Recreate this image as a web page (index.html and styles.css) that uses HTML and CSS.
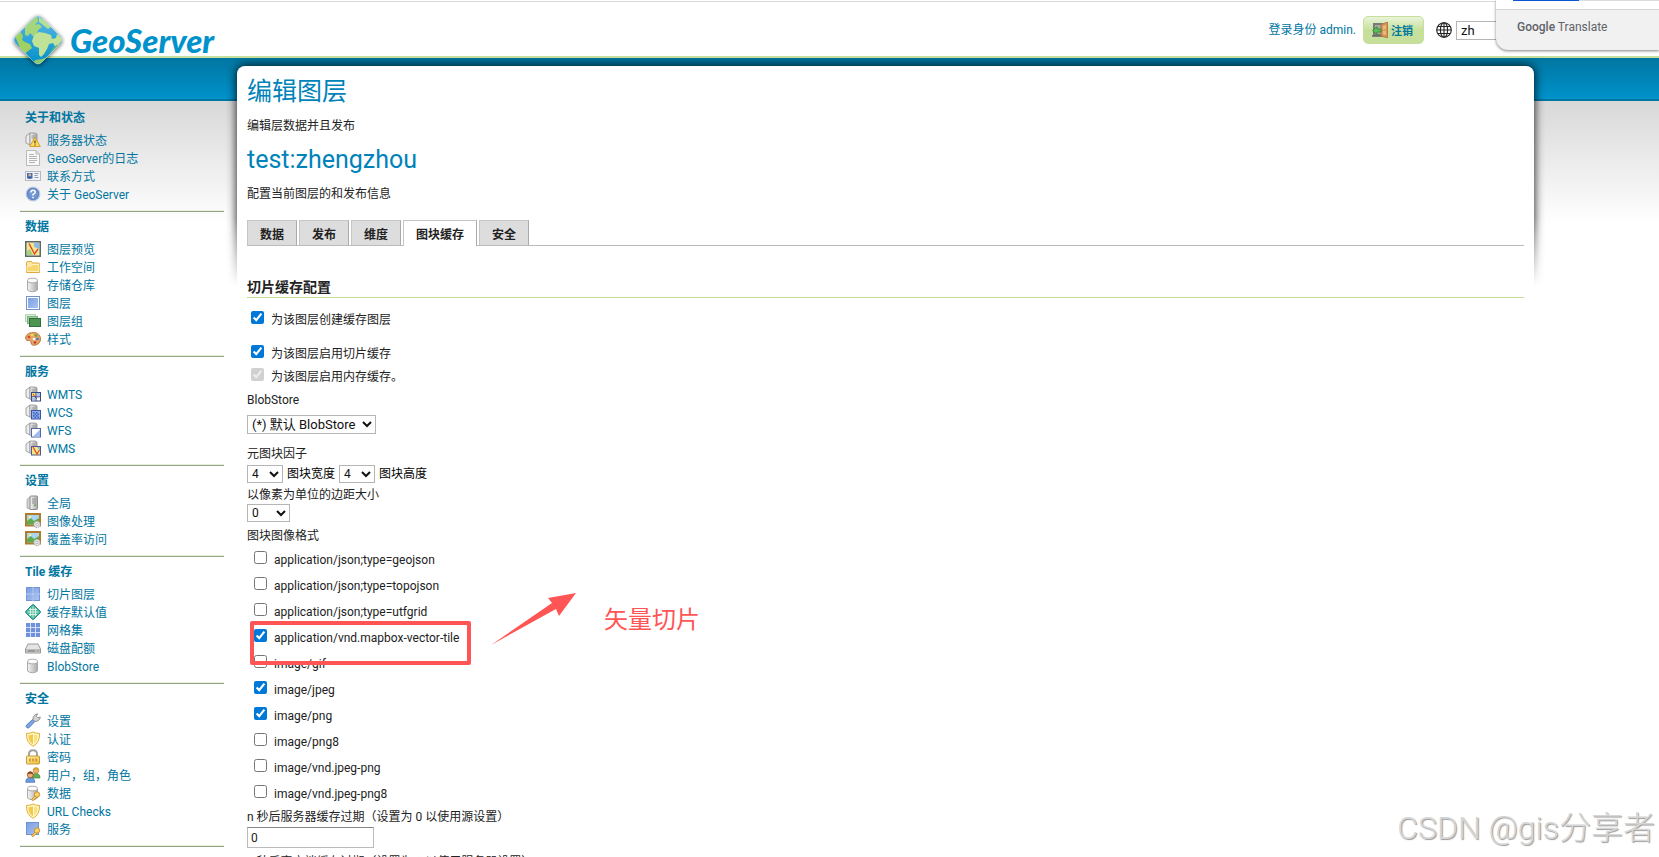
FILE: index.html
```
<!DOCTYPE html>
<html lang="zh-CN">
<head>
  <meta charset="UTF-8">
  <meta name="viewport" content="width=device-width, initial-scale=1.0">
  <title>GeoServer: 编辑图层</title>
  <link rel="stylesheet" href="styles.css">
</head>
<body>
  <!-- icon set -->
  <svg class="sprite" aria-hidden="true">
    <defs>
      <linearGradient id="gGrey" x1="0" x2="1" y1="0" y2="0"><stop offset="0" stop-color="#f6f6f6"/><stop offset="1" stop-color="#a9a9a9"/></linearGradient>
      <linearGradient id="gBlue" x1="0" x2="1" y1="0" y2="1"><stop offset="0" stop-color="#7c9fdf"/><stop offset="1" stop-color="#a9c4f2"/></linearGradient>
      <linearGradient id="gGold" x1="0" x2="1" y1="0" y2="1"><stop offset="0" stop-color="#fff3ae"/><stop offset="1" stop-color="#eab93a"/></linearGradient>
      <linearGradient id="gGlobe" x1="0" x2="0" y1="0" y2="1"><stop offset="0" stop-color="#5db9e6"/><stop offset="1" stop-color="#008fc9"/></linearGradient>
      <clipPath id="logoClip"><path d="M21 3Q25 -1 29 3L47 21Q51 25 47 29L29 47Q25 51 21 47L3 29Q-1 25 3 21Z"/></clipPath>
    </defs>
    <symbol id="i-server" viewBox="0 0 16 16">
      <path d="M2 4.500 5.500 1.500V14.500L2 13Z" fill="#d4d4d4" stroke="#999" stroke-width=".7"/>
      <rect x="5" y="1" width="7.500" height="13.500" rx="1" fill="url(#gGrey)" stroke="#8b8b8b"/>
      <path d="M7 4h4M7 6h4M7 8h4" stroke="#888" stroke-width=".9"/><rect x="9" y="9.500" width="2" height="1.500" fill="#6a9c55"/>
    </symbol>
    <symbol id="i-service" viewBox="0 0 16 16">
      <path d="M1 4 5 1V13L1 11Z" fill="#ededed" stroke="#8f8f8f" stroke-width=".8"/>
      <path d="M5 1h5l2 1v12H7l-2-1Z" fill="url(#gGrey)" stroke="#8f8f8f" stroke-width=".8"/>
      <path d="M6.500 4h4M6.500 6h4" stroke="#888" stroke-width=".8"/>
    </symbol>
    <symbol id="i-status" viewBox="0 0 16 16">
      <use href="#i-service"/>
      <path d="M10 5.500 15.300 14.500H4.700Z" fill="#fbdc60" stroke="#d99f2b" stroke-linejoin="round"/>
      <path d="M10 8.500v3M10 12.500v1" stroke="#4d3a0a" stroke-width="1.200"/>
    </symbol>
    <symbol id="i-page" viewBox="0 0 16 16">
      <path d="M1.500 .500H11L14.500 4V15.500H1.500Z" fill="#f8f8f8" stroke="#bababa"/>
      <path d="M11 .500V4h3.500" fill="#ddd" stroke="#bababa"/>
      <path d="M4 4.500h5M4 6.500h8M4 8.500h8M4 10.500h8M4 12.500h6" stroke="#b5b5b5"/>
    </symbol>
    <symbol id="i-card" viewBox="0 0 16 16">
      <rect x=".5" y="3.500" width="15" height="9" fill="#f1f3f6" stroke="#b3b9c2"/>
      <rect x="2" y="5" width="5.500" height="5.500" fill="#3f6db5"/><circle cx="4.800" cy="7" r="1.400" fill="#e8b582"/><path d="M3 10.500q1.800-3 3.600 0" fill="#274a87"/>
      <path d="M9.500 5.500h4M9.500 7.500h3M9.500 9.500h4" stroke="#8f99a8"/>
    </symbol>
    <symbol id="i-help" viewBox="0 0 16 16">
      <circle cx="8" cy="8" r="6.800" fill="#5b84c4" stroke="#b9c8e2" stroke-width="1.200"/>
      <circle cx="8" cy="8" r="5" fill="#7296d1"/>
      <path d="M5.800 6.500Q6 4.200 8 4.200q2.200 0 2.200 2Q10.200 7.500 8 8.400V9.500M8 10.700v1.500" fill="none" stroke="#fff" stroke-width="1.500"/>
    </symbol>
    <symbol id="i-preview" viewBox="0 0 16 16">
      <rect x=".8" y=".8" width="14.400" height="14.400" fill="#fff" stroke="#586258" stroke-width="1.500"/>
      <path d="M2 2h7v4l5 2v6H2Z" fill="#f5e786"/><path d="M9 2h5v6L9 6Z" fill="#8ebae8"/><path d="M2 10 5 8l3 6H2Z" fill="#a8d179"/>
      <path d="M4 2.500 9.500 13 13 8" fill="none" stroke="#db4935" stroke-width="1.400"/>
    </symbol>
    <symbol id="i-folder" viewBox="0 0 16 16">
      <path d="M1.500 3.500Q1.500 2.500 2.500 2.500h4l1 1.500h6q1 0 1 1v8.500h-13Z" fill="#fbe6a2" stroke="#dfa940"/>
      <path d="M2 12.500V7h4.500L8 5.500h6v7Z" fill="#f8d66f" stroke="#fdf4cf" stroke-width=".8"/>
    </symbol>
    <symbol id="i-db" viewBox="0 0 16 16">
      <path d="M2.500 3.500v9.500q2 1.800 5 1.800t5-1.800V3.500" fill="url(#gGrey)" stroke="#aaa"/>
      <ellipse cx="7.500" cy="3.500" rx="5" ry="2.300" fill="#fafafa" stroke="#aaa"/>
    </symbol>
    <symbol id="i-layer" viewBox="0 0 16 16">
      <rect x="1.500" y="1.500" width="13" height="13" fill="#fff" stroke="#7391ca"/><rect x="3" y="3" width="10" height="10" fill="url(#gBlue)"/>
    </symbol>
    <symbol id="i-group" viewBox="0 0 16 16">
      <rect x=".5" y="1.500" width="10" height="7" fill="#dcefdc" stroke="#b5d6b5"/>
      <rect x="2.500" y="3.500" width="10" height="7" fill="#9fcba0" stroke="#7eb37f"/>
      <rect x="4.500" y="5.500" width="11" height="8" fill="#4d9450" stroke="#30713a"/>
    </symbol>
    <symbol id="i-palette" viewBox="0 0 16 16">
      <path d="M8.500 1.500C3 1.500.6 4.500.6 7c0 2.500 2 2.700 3.700 2.500 1.700-.2 1.600 1.200 1.700 2.500.2 2 2 2.500 4 2.200 3.500-.6 5.500-3.200 5.500-6.200 0-4-3-6.500-7-6.500Z" fill="#e5a566" stroke="#b5713b" stroke-width=".9"/>
      <circle cx="4" cy="6" r="1.300" fill="#e03c31"/><circle cx="7" cy="4" r="1.300" fill="#f4df4f"/><circle cx="11" cy="4.500" r="1.300" fill="#55a84c"/><circle cx="12.500" cy="8" r="1.300" fill="#3d7cc9"/><circle cx="9" cy="8" r="1.300" fill="#fff"/><circle cx="10" cy="11.500" r="1.300" fill="#bf3d2d"/>
    </symbol>
    <symbol id="i-wmts" viewBox="0 0 16 16">
      <use href="#i-service"/>
      <rect x="6.500" y="6.500" width="9" height="8.500" fill="#fff" stroke="#3c4a82"/>
      <path d="M7 7h4v4H7Z" fill="#f1dd6f"/><path d="M12 7h3v3h-3ZM7 12h3v2H7Z" fill="#a3c3f1"/><path d="M8 8l4 5" stroke="#d84937"/><path d="M6.500 10.800h9M11 6.500V15" stroke="#3c4a82"/>
    </symbol>
    <symbol id="i-wcs" viewBox="0 0 16 16">
      <use href="#i-service"/>
      <rect x="6.500" y="6.500" width="9" height="8.500" fill="#8eaee9" stroke="#3c55a5"/>
      <path d="M8 8h1.500v1.500H8Zm3 0h1.500v1.500H11Zm-1.500 1.500H11V11H9.500Zm3 0H14V11h-1.500ZM8 11h1.500v1.500H8Zm3 0h1.500v1.500H11Zm-1.500 1.500H11V14H9.500Zm3 0H14V14h-1.500Z" fill="#3f60b8"/>
    </symbol>
    <symbol id="i-wfs" viewBox="0 0 16 16">
      <use href="#i-service"/>
      <rect x="6.500" y="6.500" width="9" height="8.500" fill="#fff" stroke="#5267a5"/><path d="M8 14.500 15 7.500v7Z" fill="#9dbcf0"/>
    </symbol>
    <symbol id="i-wms" viewBox="0 0 16 16">
      <use href="#i-service"/>
      <rect x="6.500" y="6.500" width="9" height="8.500" fill="#f5e786" stroke="#51588b"/><path d="M12 7h3v4Z" fill="#8ebae8"/><path d="M8 7l4 7 2.500-4" fill="none" stroke="#db4935" stroke-width="1.200"/>
    </symbol>
    <symbol id="i-image" viewBox="0 0 16 16">
      <rect x="1" y="1" width="14" height="11.500" fill="#a9d5f3" stroke="#b17b2c" stroke-width="2"/>
      <path d="M2 8 6 5l3 3 5-3v6.500H2Z" fill="#61ab4d"/><circle cx="5" cy="4" r="1.200" fill="#fff27a"/>
      <circle cx="12" cy="11.500" r="3.200" fill="#e4e4e4" stroke="#9b9b9b" stroke-dasharray="1.500 1"/><circle cx="12" cy="11.500" r="1.200" fill="#fff" stroke="#999" stroke-width=".6"/>
    </symbol>
    <symbol id="i-tiles" viewBox="0 0 16 16">
      <rect x="1" y="1" width="14" height="14" fill="#7293dc"/><path d="M2 2h5.500v5.500H2ZM8.500 2H14v5.500H8.500ZM2 8.500h5.500V14H2ZM8.500 8.500H14V14H8.500Z" fill="url(#gBlue)"/><path d="M8 1v14M1 8h14" stroke="#d4e0fa" stroke-width=".8"/>
    </symbol>
    <symbol id="i-grid" viewBox="0 0 16 16">
      <rect x="1" y="1" width="14" height="14" fill="#6f91dc"/><path d="M5.500 1v14M10.500 1v14M1 5.500h14M1 10.500h14" stroke="#d4e0fa"/>
    </symbol>
    <symbol id="i-gwc" viewBox="0 0 16 16">
      <path d="M7 1 1 7q-1 1 0 2l6 6q1 1 2 0l6-6q1-1 0-2L9 1Q8 0 7 1Z" fill="#4bb5a2" stroke="#218c80"/>
      <path d="M5.500 4v8M8 2.500v11M10.500 4v8M4 5.500h8M2.500 8h11M4 10.500h8" stroke="#d8f2df"/>
    </symbol>
    <symbol id="i-disk" viewBox="0 0 16 16">
      <path d="M3 4h10l2.500 5v4H.5V9Z" fill="#e5e5e5" stroke="#999"/><path d="M1 9h14v4H1Z" fill="#bcbcbc"/><path d="M3 11h7" stroke="#777"/><path d="M12 11h1.500" stroke="#6caf4f"/>
    </symbol>
    <symbol id="i-wrench" viewBox="0 0 16 16">
      <path d="M1.500 12 7.500 6.500l2.200 2.200L4.200 14.600q-1.300 1-2.500-.2T1.500 12Z" fill="#7ba3e3" stroke="#4d74b8" stroke-width=".8"/>
      <path d="M8 6.500Q7.800 2 12.500.8L11.300 3.300l1.500 1.500L15.300 4Q14.500 8.500 10 8.500Z" fill="#d5d5d5" stroke="#7c7c7c" stroke-width=".8"/>
    </symbol>
    <symbol id="i-shield" viewBox="0 0 16 16">
      <path d="M8 1Q5 2.800 1.500 2.300 1 11.500 8 15.300 15 11.500 14.500 2.300 11 2.800 8 1Z" fill="#fff6c9" stroke="#dfb032"/>
      <path d="M8 3.200Q5.500 4.500 3.400 4.200 3.500 10.500 8 13.300Z" fill="#f1c94d"/><path d="M9 3.500q2 1 3.600.7Q12.500 9.700 9 12.500Z" fill="#f8df80"/>
    </symbol>
    <symbol id="i-lock" viewBox="0 0 16 16">
      <path d="M4 7.500V5q0-3.700 4-3.700T12 5v2.500" fill="none" stroke="#a2a2a2" stroke-width="2"/>
      <rect x="1.500" y="7" width="13" height="8" rx=".8" fill="url(#gGold)" stroke="#cb9a35"/><path d="M4 9.500h2v3H4ZM7 9.500h2v3H7ZM10 9.500h2v3h-2Z" fill="#d69f35"/>
    </symbol>
    <symbol id="i-users" viewBox="0 0 16 16">
      <path d="M7 11Q7 6.500 11 6.500T15 11Z" fill="#65ad50" stroke="#428637" stroke-width=".7"/><circle cx="11" cy="3.500" r="2.800" fill="#efb178" stroke="#b98421" stroke-width=".8"/><path d="M8.300 3q.5-2.500 2.700-2.500T13.700 3Q11 1.800 8.300 3Z" fill="#d7a421"/>
      <path d="M.8 15.300Q.8 10.500 5.200 10.500T9.800 15.300Z" fill="#6a9ae0" stroke="#3d6ab0" stroke-width=".7"/><circle cx="5.300" cy="7.800" r="3" fill="#efb178" stroke="#92532e" stroke-width=".8"/><path d="M2.400 7.500Q2.800 4.500 5.300 4.500T8.200 7.500Q5 6 2.400 7.500Z" fill="#8b4a28"/>
    </symbol>
    <symbol id="i-key" viewBox="0 0 16 16">
      <circle cx="12" cy="9.500" r="2.700" fill="#f8d36b" stroke="#cb8e2b"/><path d="M10 11 6.500 14.500l1.500 1 3-2.500" fill="#f8d36b" stroke="#cb8e2b"/>
    </symbol>
    <symbol id="i-dbkey" viewBox="0 0 16 16"><use href="#i-db"/><use href="#i-key"/></symbol>
    <symbol id="i-svckey" viewBox="0 0 16 16"><rect x="1.500" y="1.500" width="12" height="12" fill="url(#gBlue)" stroke="#6f91d2"/><use href="#i-key"/></symbol>
    <symbol id="i-door" viewBox="0 0 16 16">
      <path d="M1 1h10v13H1Z" fill="#777d76"/><path d="M3 3h6v9H3Z" fill="#a4aaa2"/><path d="M0 14h11" stroke="#656565" stroke-width="1.500"/>
      <path d="M9 2.500 15.500 0v16L9 14Z" fill="#d69453" stroke="#a66930" stroke-width=".7"/><path d="M11 4 14 3v4l-3 .5ZM11 9l3-.5V13l-3-.8Z" fill="#edba7d"/>
      <path d="M.5 8.500 5 4.700V7h4v3H5v2.300Z" fill="#5dbd5a" stroke="#26802b" stroke-width=".7"/>
    </symbol>
    <symbol id="i-globe" viewBox="0 0 16 16">
      <g fill="none" stroke="#222" stroke-width="1.100"><circle cx="8" cy="8" r="7.300"/><ellipse cx="8" cy="8" rx="3.600" ry="7.300"/><path d="M8 .7v14.600M.7 8h14.600M1.800 4.500h12.400M1.800 11.500h12.400"/></g>
    </symbol>
  </svg>

  <header class="header">
    <a class="logo" href="#">
      <svg class="logo-mark" viewBox="0 0 50 50" aria-hidden="true">
        <g clip-path="url(#logoClip)">
          <path d="M0 0h50v50H0Z" fill="url(#gGlobe)"/>
          <path d="M12 12 24 1l1 5-3 4 4-1 3 3-4 3-1 4-4 2-3-3-2 3-3-1Z" fill="#a5d67c"/>
          <path d="M26 2l8 5 4 5-3 2-5-4-4-3Z" fill="#b5df91"/>
          <path d="M2 21l5-5 3 5-1 4 3 2 5 2 2 4-5 4-4 3Z" fill="#9ed062"/>
          <path d="M21 20l5-3 6 1 6 2 1 4 4-1 1-4 6 5-7 9-3-5-4 1-2 5-3 5-3 3-2-2v-7l-5-2-2-5Z" fill="#c0e296"/>
          <path d="M22 45l7-1 6-2-8 8-6-2Z" fill="#8bcb6a"/>
          <path d="M40 33l5-4-3 8-6 3Z" fill="#5fba7b"/>
        </g>
        <path d="M21 3Q25 -1 29 3L47 21Q51 25 47 29L29 47Q25 51 21 47L3 29Q-1 25 3 21Z" fill="none" stroke="#dbeef5" stroke-opacity=".5"/>
      </svg>
      <span>GeoServer</span>
    </a>
    <div class="login">
      <span class="user">登录身份 admin.</span>
      <button class="logout" type="button"><svg class="icon"><use href="#i-door"/></svg>注销</button>
      <svg class="icon globe"><use href="#i-globe"/></svg>
      <select class="lang" aria-label="语言"><option>zh</option><option>en</option></select>
    </div>
  </header>

  <div class="wrapper">
    <nav class="sidebar">
      <section>
        <h3>关于和状态</h3>
        <ul>
          <li><a href="#"><svg class="icon"><use href="#i-status"/></svg>服务器状态</a></li>
          <li><a href="#"><svg class="icon"><use href="#i-page"/></svg>GeoServer的日志</a></li>
          <li><a href="#"><svg class="icon"><use href="#i-card"/></svg>联系方式</a></li>
          <li><a href="#"><svg class="icon"><use href="#i-help"/></svg>关于 GeoServer</a></li>
        </ul>
      </section>
      <section>
        <h3>数据</h3>
        <ul>
          <li><a href="#"><svg class="icon"><use href="#i-preview"/></svg>图层预览</a></li>
          <li><a href="#"><svg class="icon"><use href="#i-folder"/></svg>工作空间</a></li>
          <li><a href="#"><svg class="icon"><use href="#i-db"/></svg>存储仓库</a></li>
          <li><a href="#"><svg class="icon"><use href="#i-layer"/></svg>图层</a></li>
          <li><a href="#"><svg class="icon"><use href="#i-group"/></svg>图层组</a></li>
          <li><a href="#"><svg class="icon"><use href="#i-palette"/></svg>样式</a></li>
        </ul>
      </section>
      <section>
        <h3>服务</h3>
        <ul>
          <li><a href="#"><svg class="icon"><use href="#i-wmts"/></svg>WMTS</a></li>
          <li><a href="#"><svg class="icon"><use href="#i-wcs"/></svg>WCS</a></li>
          <li><a href="#"><svg class="icon"><use href="#i-wfs"/></svg>WFS</a></li>
          <li><a href="#"><svg class="icon"><use href="#i-wms"/></svg>WMS</a></li>
        </ul>
      </section>
      <section>
        <h3>设置</h3>
        <ul>
          <li><a href="#"><svg class="icon"><use href="#i-server"/></svg>全局</a></li>
          <li><a href="#"><svg class="icon"><use href="#i-image"/></svg>图像处理</a></li>
          <li><a href="#"><svg class="icon"><use href="#i-image"/></svg>覆盖率访问</a></li>
        </ul>
      </section>
      <section>
        <h3>Tile 缓存</h3>
        <ul>
          <li><a href="#"><svg class="icon"><use href="#i-tiles"/></svg>切片图层</a></li>
          <li><a href="#"><svg class="icon"><use href="#i-gwc"/></svg>缓存默认值</a></li>
          <li><a href="#"><svg class="icon"><use href="#i-grid"/></svg>网格集</a></li>
          <li><a href="#"><svg class="icon"><use href="#i-disk"/></svg>磁盘配额</a></li>
          <li><a href="#"><svg class="icon"><use href="#i-db"/></svg>BlobStore</a></li>
        </ul>
      </section>
      <section>
        <h3>安全</h3>
        <ul>
          <li><a href="#"><svg class="icon"><use href="#i-wrench"/></svg>设置</a></li>
          <li><a href="#"><svg class="icon"><use href="#i-shield"/></svg>认证</a></li>
          <li><a href="#"><svg class="icon"><use href="#i-lock"/></svg>密码</a></li>
          <li><a href="#"><svg class="icon"><use href="#i-users"/></svg>用户，组，角色</a></li>
          <li><a href="#"><svg class="icon"><use href="#i-dbkey"/></svg>数据</a></li>
          <li><a href="#"><svg class="icon"><use href="#i-shield"/></svg>URL Checks</a></li>
          <li><a href="#"><svg class="icon"><use href="#i-svckey"/></svg>服务</a></li>
        </ul>
      </section>
    </nav>

    <main class="main">
      <div class="shade"></div>
      <div class="page">
        <h1>编辑图层</h1>
        <p>编辑层数据并且发布</p>
        <h2>test:zhengzhou</h2>
        <p>配置当前图层的和发布信息</p>

        <div class="tabs" role="tablist">
          <button type="button" role="tab">数据</button>
          <button type="button" role="tab">发布</button>
          <button type="button" role="tab">维度</button>
          <button type="button" role="tab" class="selected" aria-selected="true">图块缓存</button>
          <button type="button" role="tab">安全</button>
        </div>

        <form class="form">
          <h4>切片缓存配置</h4>
          <div class="check create"><input type="checkbox" id="create" checked><label for="create">为该图层创建缓存图层</label></div>
          <div class="check"><input type="checkbox" id="enabled" checked><label for="enabled">为该图层启用切片缓存</label></div>
          <div class="check"><input type="checkbox" id="memory" checked disabled><label for="memory">为该图层启用内存缓存。</label></div>

          <label class="label" for="blob">BlobStore</label>
          <select id="blob" class="blob"><option>(*) 默认 BlobStore</option></select>

          <div class="label">元图块因子</div>
          <div class="meta">
            <select id="metaX"><option>4</option></select><label for="metaX">图块宽度</label>
            <select id="metaY"><option>4</option></select><label for="metaY">图块高度</label>
          </div>
          <label class="label gutter-label" for="gutter">以像素为单位的边距大小</label>
          <select id="gutter" class="gutter"><option>0</option></select>

          <div class="label formats-label">图块图像格式</div>
          <ul class="formats">
            <li class="check"><input type="checkbox" id="f0"><label for="f0">application/json;type=geojson</label></li>
            <li class="check"><input type="checkbox" id="f1"><label for="f1">application/json;type=topojson</label></li>
            <li class="check"><input type="checkbox" id="f2"><label for="f2">application/json;type=utfgrid</label></li>
            <li class="check"><input type="checkbox" id="f3" checked><label for="f3">application/vnd.mapbox-vector-tile</label></li>
            <li class="check"><input type="checkbox" id="f4"><label for="f4">image/gif</label></li>
            <li class="check"><input type="checkbox" id="f5" checked><label for="f5">image/jpeg</label></li>
            <li class="check"><input type="checkbox" id="f6" checked><label for="f6">image/png</label></li>
            <li class="check"><input type="checkbox" id="f7"><label for="f7">image/png8</label></li>
            <li class="check"><input type="checkbox" id="f8"><label for="f8">image/vnd.jpeg-png</label></li>
            <li class="check"><input type="checkbox" id="f9"><label for="f9">image/vnd.jpeg-png8</label></li>
          </ul>

          <label class="label" for="expireCache">n 秒后服务器缓存过期（设置为 0 以使用源设置）</label>
          <input class="expire" type="text" id="expireCache" value="0">
          <label class="label" for="expireClients">n 秒后客户端缓存过期（设置为 0 以使用服务器设置）</label>
          <input class="expire" type="text" id="expireClients" value="0">
        </form>
      </div>

      <div class="mark-box"></div>
      <svg class="mark-arrow" viewBox="0 0 86 54" aria-hidden="true"><path d="M0 53 61 11 57 6 85 1 68 24 65 17Z" fill="#ff5555"/></svg>
      <span class="mark-text">矢量切片</span>
    </main>
  </div>

  <aside class="translate"><div class="translate-bar"></div><div class="translate-foot"><b>Google</b> Translate</div></aside>
  <div class="watermark">CSDN @gis分享者</div>
</body>
</html>
```
FILE: styles.css
```
* {
  box-sizing: border-box;
}
body {
  margin: 0;
  padding-top: 1px;
  height: 100vh;
  overflow: hidden;
  position: relative;
  background: #fff;
  color: #222;
  font: 12px/18px Roboto, "Noto Sans CJK SC", sans-serif;
}
h1, h2, h3, h4, p, ul {
  margin: 0;
  padding: 0;
  list-style: none;
}
a {
  color: #0076a1;
  text-decoration: none;
}
button, select, input {
  font-family: inherit;
}
.sprite {
  position: absolute;
  width: 0;
  height: 0;
}
.icon {
  width: 16px;
  height: 16px;
  flex: none;
}

/* header */
.header {
  display: flex;
  justify-content: space-between;
  align-items: flex-start;
  height: 57px;
  padding: 0 125px 0 13px;
  border-top: 1px solid #d9d9dc;
  border-bottom: 2px solid #c6e09b;
}
.logo {
  display: flex;
  gap: 7px;
  position: relative;
  z-index: 1;
  padding-top: 13px;
  color: #0092cb;
  font: italic 900 33px/50px Lato, sans-serif;
}
.logo-mark {
  width: 50px;
  height: 50px;
  filter: drop-shadow(0 1px 2px rgba(0, 0, 0, .6));
}
.login {
  display: flex;
  align-items: center;
  padding-top: 14px;
  color: #0076a1;
}
.logout {
  display: flex;
  align-items: center;
  gap: 3px;
  height: 28px;
  margin: 0 12px 0 7px;
  padding: 0 10px 0 8px;
  border: 1px solid #c6e09b;
  border-radius: 5px;
  background: linear-gradient(#e9f4d9, #c6e09b 50%);
  color: #0076a1;
  font-size: 11px;
  font-weight: bold;
}
.lang {
  width: 78px;
  height: 19px;
  margin-left: 4px;
  font-size: 13px;
}
select {
  padding: 0;
  border: 1px solid #b5b5b5;
  border-radius: 0;
  background: #fff;
  color: #111;
}

/* layout */
.wrapper {
  display: flex;
  align-items: flex-start;
  background:
    linear-gradient(#0076a1, #0092cb 41px, #0076a1 41px, #0076a1 43px, transparent 43px),
    linear-gradient(#d8d8d8 43px, #fff 165px);
}
.sidebar {
  width: 237px;
  flex: none;
  padding: 45px 13px 0 20px;
}
.sidebar section {
  padding: 6px 5px;
  border-bottom: 1px solid #98a284;
  box-shadow: inset 0 -1px #e6efd9;
}
.sidebar h3 {
  margin-bottom: 5px;
  color: #0076a1;
  font-size: 12px;
  line-height: 18px;
}
.sidebar ul {
  margin-bottom: 1px;
}
.sidebar li a {
  display: flex;
  gap: 6px;
}

.main {
  flex: 1;
  position: relative;
  margin: 8px 125px 0 0;
}
.page {
  position: relative;
  padding: 10px;
  border-radius: 8px;
  background: #fff;
}
.shade {
  position: absolute;
  inset: -8px -12px auto;
  height: 228px;
  padding: 8px 12px 0;
  overflow: hidden;
  -webkit-mask-image: linear-gradient(#000 70%, transparent);
  mask-image: linear-gradient(#000 70%, transparent);
}
.shade::before {
  content: "";
  display: block;
  height: 260px;
  border-radius: 8px;
  box-shadow: 0 0 10px 1px rgba(0, 0, 0, .8);
}

h1, h2 {
  color: #0083b9;
  font-size: 25px;
  font-weight: 400;
  line-height: 32px;
}
.page p {
  margin: 9px 0;
}

/* tabs */
.tabs {
  display: flex;
  gap: 2px;
  margin-top: 17px;
  border-bottom: 1px solid #bbb;
}
.tabs button {
  height: 25px;
  padding: 0 12px;
  border: 1px solid #c5c5c5;
  border-bottom: 0;
  border-right-color: #aaa;
  background: #ddd;
  color: #222;
  font-size: 12px;
  font-weight: bold;
}
.tabs .selected {
  height: 26px;
  margin-bottom: -1px;
  background: #fff;
}

/* form */
.form {
  padding-top: 31px;
}
.form h4 {
  margin-bottom: 13px;
  border-bottom: 1px solid #c3dc95;
  font-size: 14px;
  line-height: 20px;
}
.check {
  display: flex;
  align-items: flex-start;
  gap: 7px;
  margin-bottom: 5px;
  padding-left: 4px;
}
.check.create {
  margin-bottom: 16px;
}
.check input {
  width: 13px;
  height: 13px;
  margin: 0;
  accent-color: #0078d7;
}
.label {
  display: block;
  width: max-content;
}
.form select {
  display: block;
  height: 18px;
  font-size: 12px;
}
.form .blob {
  width: 129px;
  height: 19px;
  margin: 6px 0 11px;
  font-size: 13px;
}
.meta {
  display: flex;
  gap: 4px;
  margin: 2px 0 3px;
  color: #000;
}
.meta select {
  width: 36px;
}
.form .gutter {
  width: 43px;
  margin-bottom: 5px;
}
.formats {
  margin: 6px 0 5px;
  padding-left: 3px;
}
.formats .check {
  margin-bottom: 8px;
}
.formats .check:last-child {
  margin-bottom: 0;
}
.expire {
  display: block;
  width: 127px;
  height: 21px;
  margin: 1px 0 5px;
  padding: 0 3px;
  border: 1px solid #bbb;
  border-top-color: #888;
  color: #222;
  font-size: 12px;
}

/* hand-drawn marks over the form */
.mark-box {
  position: absolute;
  left: 13px;
  top: 555px;
  width: 221px;
  height: 44px;
  border: 4px solid #ff5555;
  border-radius: 2px;
}
.mark-arrow {
  position: absolute;
  left: 254px;
  top: 526px;
  width: 86px;
  height: 54px;
}
.mark-text {
  position: absolute;
  left: 367px;
  top: 538px;
  color: #ff5555;
  font-size: 24px;
  line-height: 32px;
}

/* overlays */
.translate {
  position: absolute;
  top: 0;
  right: 0;
  z-index: 2;
  width: 163px;
  height: 50px;
  overflow: hidden;
  border-bottom-left-radius: 12px;
  background: #f1f1f1;
  box-shadow: 0 1px 3px rgba(0, 0, 0, .5);
}
.translate-bar {
  height: 10px;
  border-bottom: 1px solid #d5d5d5;
  background: linear-gradient(90deg, #fff 17px, #0b57d0 17px, #0b57d0 83px, #dadce0 83px) 0 0 / 100% 1px no-repeat #fff;
}
.translate-foot {
  padding: 8px 21px;
  color: #5f6368;
  font-size: 12px;
}
.translate-foot b {
  font-weight: 500;
}
.watermark {
  position: absolute;
  right: 4px;
  bottom: 6px;
  color: #d6d6d6;
  font-size: 32px;
  font-weight: 300;
  line-height: 46px;
  text-shadow: 1px 1px 1px #999;
}
```
